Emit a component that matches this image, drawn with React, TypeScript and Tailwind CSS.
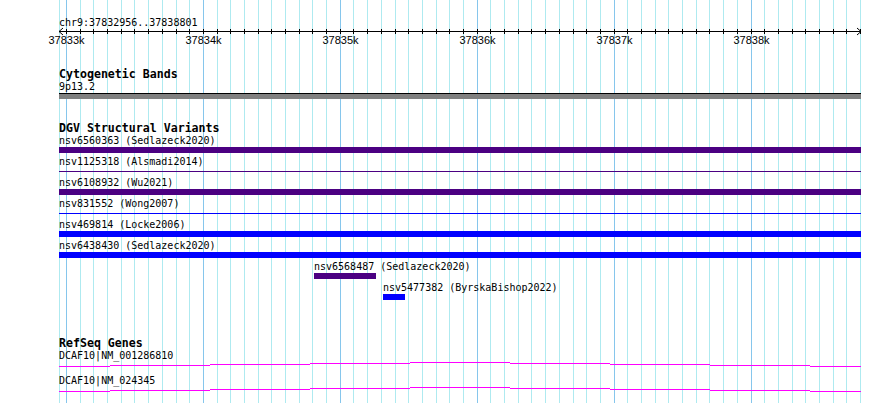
import React from 'react';

const MONO = "font-['DejaVu_Sans_Mono','Liberation_Mono',monospace]";

// grid / ticks every 100bp, major every 1kb (37833k at x=66)
const GRID = Array.from({ length: 59 }, (_, k) => ({
  x: Math.round(66 + k * 13.69),
  major: k % 10 === 0,
}));

const LABELS = ['37833k', '37834k', '37835k', '37836k', '37837k', '37838k'];

const SV_ROWS = [
  { name: 'nsv6560363 (Sedlazeck2020)', color: 'purple', thick: true },
  { name: 'nsv1125318 (Alsmadi2014)', color: 'purple', thick: false },
  { name: 'nsv6108932 (Wu2021)', color: 'purple', thick: true },
  { name: 'nsv831552 (Wong2007)', color: 'blue', thick: false },
  { name: 'nsv469814 (Locke2006)', color: 'blue', thick: true },
  { name: 'nsv6438430 (Sedlazeck2020)', color: 'blue', thick: true },
];

// intron "hat" steps, x in content coords (content starts at x=59)
const HAT = [59, 110, 210, 310, 410, 510, 610, 710, 810, 861];
const HAT_DY = [4, 3, 2, 1, 0, 1, 2, 3, 4];

function Grid() {
  return (
    <svg className="absolute inset-0" width={890} height={403} shapeRendering="crispEdges">
      <rect x={59} y={0} width={1} height={403} fill="#aeeaf0" />
      {GRID.map((g) => (
        <rect key={g.x} x={g.x} y={0} width={1} height={403} fill={g.major ? '#86c6ec' : '#aeeaf0'} />
      ))}
    </svg>
  );
}

function Ruler() {
  return (
    <div className="relative h-[18px]">
      <svg className="absolute left-0 top-0 overflow-visible" width={802} height={18} shapeRendering="crispEdges">
        <rect x={0} y={2} width={802} height={1} fill="#000" />
        {GRID.map((g) => (
          <rect key={g.x} x={g.x - 59} y={0} width={1} height={5} fill="#000" />
        ))}
        <polyline points="4,-1 0,2.5 4,6" fill="none" stroke="#000" strokeWidth={1} shapeRendering="auto" />
        <polyline points="798,-1 802,2.5 798,6" fill="none" stroke="#000" strokeWidth={1} shapeRendering="auto" />
      </svg>
      {LABELS.map((l, i) => (
        <span
          key={l}
          className="absolute top-[5px] -translate-x-1/2 font-['Liberation_Sans',Arial,sans-serif] text-[11px] leading-[13px] text-black whitespace-nowrap"
          style={{ left: GRID[i * 10].x - 59 + 0.5 }}
        >
          {l}
        </span>
      ))}
    </div>
  );
}

function TrackTitle({ children }: { children: React.ReactNode }) {
  return <div className={`${MONO} font-bold text-[11.6px] leading-[12px] h-[12px] text-black whitespace-nowrap`}>{children}</div>;
}

function Label({ children }: { children: React.ReactNode }) {
  return <div className={`${MONO} text-[10px] leading-[13px] h-[13px] text-black whitespace-nowrap`}>{children}</div>;
}

function SvRow({ name, color, thick }: { name: string; color: string; thick: boolean }) {
  const bg = color === 'purple' ? 'bg-[#4b0082]' : 'bg-[#0000ff]';
  return (
    <div className="h-[21px]">
      <Label>{name}</Label>
      <div className="h-[6px] flex flex-col justify-center">
        {thick ? <div className={`h-[6px] ${bg}`} /> : <div className={`h-px ${bg}`} />}
      </div>
    </div>
  );
}

function GeneRow({ name }: { name: string }) {
  return (
    <div className="h-[25px]">
      <Label>{name}</Label>
      <svg width={802} height={6} shapeRendering="crispEdges" className="block">
        {HAT_DY.map((dy, i) => (
          <rect key={i} x={HAT[i] - 59} y={dy} width={HAT[i + 1] - HAT[i]} height={1} fill="#ff00ff" />
        ))}
      </svg>
    </div>
  );
}

export default function App() {
  return (
    <div className="relative w-[890px] h-[403px] overflow-hidden bg-white">
      <Grid />
      <div className="relative w-[861px] pl-[59px] pt-[16px] flex flex-col">
        <Label>chr9:37832956..37838801</Label>
        <Ruler />

        <div className="mt-[21px]">
          <TrackTitle>Cytogenetic Bands</TrackTitle>
          <Label>9p13.2</Label>
          <div className="h-[6px] border-t border-black bg-[#808080]" />
        </div>

        <div className="mt-[23px]">
          <TrackTitle>DGV Structural Variants</TrackTitle>
          {SV_ROWS.map((r) => (
            <SvRow key={r.name} {...r} />
          ))}
          <div className="h-[21px] ml-[255px]">
            <Label>nsv6568487 (Sedlazeck2020)</Label>
            <div className="h-[6px] w-[62px] bg-[#4b0082]" />
          </div>
          <div className="h-[21px] ml-[324px]">
            <Label>nsv5477382 (ByrskaBishop2022)</Label>
            <div className="h-[6px] w-[22px] bg-[#0000ff]" />
          </div>
        </div>

        <div className="mt-[35px]">
          <TrackTitle>RefSeq Genes</TrackTitle>
          <GeneRow name="DCAF10|NM_001286810" />
          <GeneRow name="DCAF10|NM_024345" />
        </div>
      </div>
    </div>
  );
}
